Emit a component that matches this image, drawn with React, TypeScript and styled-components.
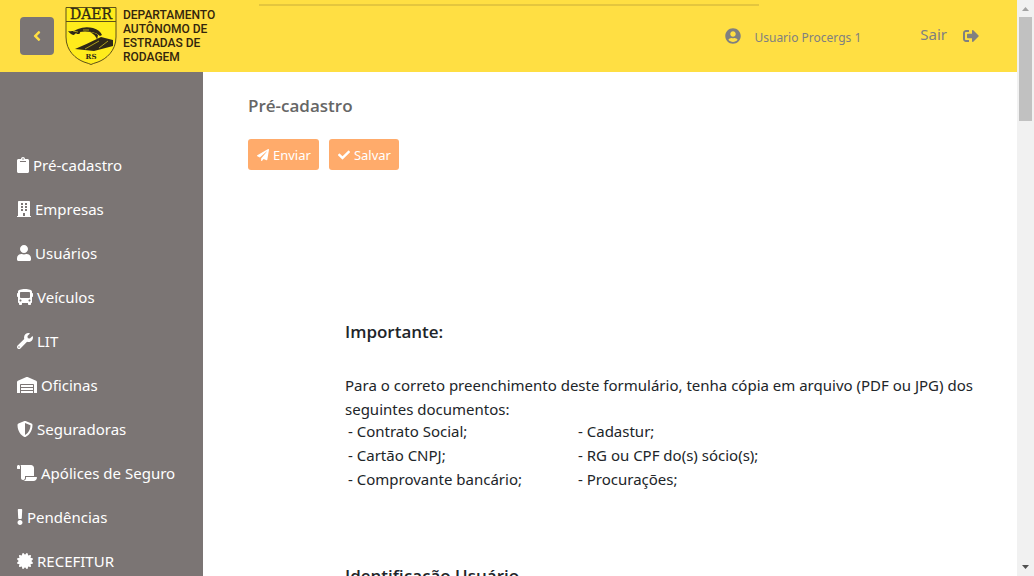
import React from "react";
import styled, { createGlobalStyle } from "styled-components";
import {
  FaAngleLeft, FaBuilding, FaBus, FaCertificate, FaCheck, FaClipboard, FaExclamation,
  FaPaperPlane, FaScroll, FaShieldAlt, FaSignOutAlt, FaUser, FaUserCircle, FaWarehouse, FaWrench,
} from "react-icons/fa";
import type { IconType } from "react-icons";

const GlobalStyle = createGlobalStyle`
  * { box-sizing: border-box; }
  body {
    margin: 0;
    background: #fff;
    color: #212529;
    font: 15px/24px "Noto Sans", "Open Sans", sans-serif;
  }
`;

const Shell = styled.div`
  display: flex;
  height: 100vh;
  overflow: hidden;
`;

const Page = styled.div`
  flex: 1;
  min-width: 0;
  display: flex;
  flex-direction: column;
`;

const Header = styled.header`
  position: relative;
  flex: none;
  height: 72px;
  display: flex;
  align-items: center;
  padding: 0 38px 0 20px;
  background: #ffdf43;
  color: #808080;
`;

const BackButton = styled.button`
  width: 34px;
  height: 38px;
  display: grid;
  place-items: center;
  padding: 0;
  border: 0;
  border-radius: 4px;
  background: #7b7574;
  color: #ffdf43;
  font-size: 16px;
`;

const Brand = styled.a`
  display: flex;
  align-items: center;
  gap: 6px;
  margin-left: 11px;
  color: #33250c;
  font: 500 12px/14px Roboto, sans-serif;
  text-decoration: none;
`;

const BrandName = styled.span`
  width: 100px;
`;

const Progress = styled.div`
  position: absolute;
  top: 4px;
  left: 259px;
  width: 500px;
  height: 2px;
  background: #e4c63e;
`;

const Account = styled.div`
  display: flex;
  align-items: center;
  gap: 13px;
  margin-left: auto;
  font-size: 16px;
`;

const AccountName = styled.span`
  padding-top: 4px;
  font-size: 12px;
`;

const Logout = styled.a`
  display: flex;
  align-items: center;
  gap: 16px;
  margin-left: 59px;
  color: inherit;
  font-size: 15px;
  text-decoration: none;
`;

const LogoutLabel = styled.span`
  padding-bottom: 4px;
`;

const Body = styled.div`
  flex: 1;
  min-height: 0;
  display: flex;
`;

const Sidebar = styled.nav`
  flex: none;
  width: 203px;
  padding-top: 71px;
  overflow: hidden;
  background: #7b7574;
`;

const Menu = styled.ul`
  margin: 0;
  padding: 0;
  list-style: none;
`;

const MenuLink = styled.a<{ $iconWidth: number }>`
  display: flex;
  align-items: center;
  gap: 4px;
  height: 44px;
  padding-left: 17px;
  color: #fff;
  text-decoration: none;
  svg {
    flex: none;
    width: ${(p) => p.$iconWidth}px;
    height: 16px;
  }
`;

const Main = styled.main`
  flex: 1;
  min-width: 0;
  padding: 22px 30px 0 45px;
  overflow: hidden;
`;

const Title = styled.h1`
  margin: 0;
  color: #666;
  font: 600 17px/24px "Open Sans", "Noto Sans", sans-serif;
`;

const Toolbar = styled.div`
  display: flex;
  gap: 10px;
  margin-top: 21px;
`;

const Action = styled.button`
  display: flex;
  align-items: center;
  gap: 4px;
  height: 31px;
  padding: 0 8px 0 9px;
  border: 0;
  border-radius: 3px;
  background: #ffab6b;
  color: #fff;
  font: 13px/20px "Noto Sans", "Open Sans", sans-serif;
  svg { font-size: 12px; }
`;

const Form = styled.div`
  margin: 150px 0 0 97px;
`;

const SectionTitle = styled.h2`
  margin: 0;
  font: 600 17px/24px "Open Sans", "Noto Sans", sans-serif;
`;

const Intro = styled.p`
  margin: 29px 0 0;
`;

const Documents = styled.div`
  display: flex;
  margin: -2px 0 73px 3px;
`;

const DocumentList = styled.ul`
  width: 230px;
  margin: 0;
  padding: 0;
  list-style: none;
`;

const Scrollbar = styled.div`
  flex: none;
  width: 17px;
  display: flex;
  flex-direction: column;
  align-items: center;
  background: #f1f1f1;
`;

const ScrollArrow = styled.svg`
  flex: none;
  width: 17px;
  height: 17px;
`;

const Thumb = styled.div`
  width: 13px;
  height: 104px;
  margin-bottom: auto;
  background: #c1c1c1;
`;

const menu: { label: string; icon: IconType; width: number }[] = [
  { label: "Pré-cadastro", icon: FaClipboard, width: 12 },
  { label: "Empresas", icon: FaBuilding, width: 14 },
  { label: "Usuários", icon: FaUser, width: 14 },
  { label: "Veículos", icon: FaBus, width: 16 },
  { label: "LIT", icon: FaWrench, width: 16 },
  { label: "Oficinas", icon: FaWarehouse, width: 20 },
  { label: "Seguradoras", icon: FaShieldAlt, width: 16 },
  { label: "Apólices de Seguro", icon: FaScroll, width: 20 },
  { label: "Pendências", icon: FaExclamation, width: 6 },
  { label: "RECEFITUR", icon: FaCertificate, width: 16 },
];

const Crest = () => (
  <svg width="52" height="60" viewBox="0 0 52 60" aria-hidden="true">
    <path d="M1 1.500H51V31C51 45 41 53 33 56Q28 57.500 26 58.500Q24 57.500 19 56C11 53 1 45 1 31Z" fill="#ffec1c" stroke="#5f5118" />
    <path d="M1 15.500H51" stroke="#5f5118" />
    <path d="M3 25Q8 26 13 23Q20 20 28 22Q35 24 37 29L35 30Q32 27 27 26Q19 25 15 26Q16 28 12 28Q11 26 9 29Q6 29 3 25Z" fill="#2e2818" />
    <path d="M25 26Q31 27 33 29L32 34Q31 29 25 26ZM36 31L48 34V40L29 45L10 43Q22 38 36 31Z" fill="#2e2818" />
    <path d="M8 25L13 26M18 24L24 24M20 43L34 35M34 42L43 35" stroke="#ffec1c" strokeWidth="0.600" />
    <text x="26" y="13" textAnchor="middle" fontFamily="DejaVu Serif, serif" fontWeight="400" fontSize="14" fill="#2e2818" stroke="#2e2818" strokeWidth="0.300">DAER</text>
    <text x="26" y="53" textAnchor="middle" fontFamily="DejaVu Serif, serif" fontWeight="700" fontSize="7" fill="#2e2818">RS</text>
  </svg>
);

export default function App() {
  return (
    <Shell>
      <GlobalStyle />
      <Page>
        <Header>
          <BackButton type="button" aria-label="Recolher menu"><FaAngleLeft /></BackButton>
          <Brand href="#">
            <Crest />
            <BrandName>DEPARTAMENTO AUTÔNOMO DE ESTRADAS DE RODAGEM</BrandName>
          </Brand>
          <Account>
            <FaUserCircle />
            <AccountName>Usuario Procergs 1</AccountName>
          </Account>
          <Logout href="#">
            <LogoutLabel>Sair</LogoutLabel>
            <FaSignOutAlt size={16} />
          </Logout>
          <Progress />
        </Header>
        <Body>
          <Sidebar>
            <Menu>
              {menu.map(({ label, icon: Icon, width }) => (
                <li key={label}><MenuLink href="#" $iconWidth={width}><Icon />{label}</MenuLink></li>
              ))}
            </Menu>
          </Sidebar>
          <Main>
            <Title>Pré-cadastro</Title>
            <Toolbar>
              <Action type="button"><FaPaperPlane />Enviar</Action>
              <Action type="button"><FaCheck />Salvar</Action>
            </Toolbar>
            <Form>
              <SectionTitle>Importante:</SectionTitle>
              <Intro>
                Para o correto preenchimento deste formulário, tenha cópia em arquivo (PDF ou JPG) dos
                seguintes documentos:
              </Intro>
              <Documents>
                <DocumentList>
                  <li>- Contrato Social;</li>
                  <li>- Cartão CNPJ;</li>
                  <li>- Comprovante bancário;</li>
                </DocumentList>
                <DocumentList>
                  <li>- Cadastur;</li>
                  <li>- RG ou CPF do(s) sócio(s);</li>
                  <li>- Procurações;</li>
                </DocumentList>
              </Documents>
              <SectionTitle>Identificação Usuário</SectionTitle>
            </Form>
          </Main>
        </Body>
      </Page>
      <Scrollbar aria-hidden="true">
        <ScrollArrow viewBox="0 0 17 17"><path d="M5 11H12L8.500 7Z" fill="#a3a3a3" /></ScrollArrow>
        <Thumb />
        <ScrollArrow viewBox="0 0 17 17"><path d="M5 6H12L8.500 10Z" fill="#505050" /></ScrollArrow>
      </Scrollbar>
    </Shell>
  );
}
